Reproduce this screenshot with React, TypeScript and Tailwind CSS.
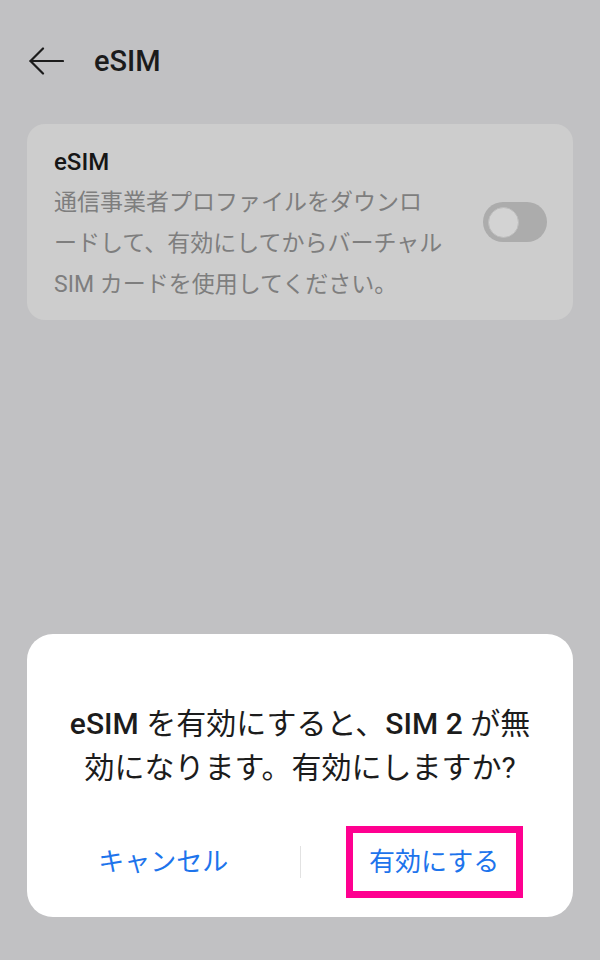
import React from "react";

export default function App() {
  const font = { fontFamily: 'Roboto, "Noto Sans CJK JP", sans-serif' };
  return (
    <div
      className="w-[600px] h-[960px] bg-[#c1c1c3] flex flex-col overflow-hidden"
      style={font}
    >
      {/* Header */}
      <div className="h-[122px] flex items-center pl-[29px] shrink-0">
        <svg width="35" height="28" viewBox="0 0 35 28" fill="none" className="shrink-0">
          <path d="M1.5 14H34" stroke="#1c1c1c" strokeWidth="2.2" strokeLinecap="round" />
          <path d="M14 1.5L1.5 14L14 26.5" stroke="#1c1c1c" strokeWidth="2.2" strokeLinecap="round" strokeLinejoin="round" />
        </svg>
        <div className="ml-[30px] text-[29px] font-medium text-[#1b1b1b] leading-none">eSIM</div>
      </div>

      {/* Card */}
      <div className="mx-[27px] mt-[2px] h-[196px] rounded-[18px] bg-[#cdcdcd] flex items-center pl-[27px] pr-[26px]">
        <div className="flex-1 flex flex-col pt-[7px]">
          <div className="text-[24px] leading-[32px] font-medium text-[#161616]">eSIM</div>
          <div className="mt-[4px] text-[23px] leading-[41px] text-[#7e7e7e] whitespace-nowrap">
            通信事業者プロファイルをダウンロ
            <br />
            ードして、有効にしてからバーチャル
            <br />
            SIM カードを使用してください。
          </div>
        </div>
        <div className="w-[64px] h-[40px] rounded-full bg-[#acacac] flex items-center shrink-0">
          <div className="ml-[5px] w-[31px] h-[31px] rounded-full bg-[#d3d3d3] border border-[#bdbdbd]" />
        </div>
      </div>

      {/* Dialog */}
      <div className="mt-auto mb-[43px] mx-[27px] h-[283px] rounded-[26px] bg-white flex flex-col">
        <div className="pt-[68px] text-center text-[30px] leading-[44px] text-[#1c1c1c]">
          <span className="font-medium">eSIM</span> を有効にすると、<span className="font-medium">SIM 2</span> が無
          <br />
          効になります。有効にしますか?
        </div>
        <div className="mt-[36px] h-[72px] flex items-center">
          <div className="flex-1 flex items-center justify-center text-[26px] text-[#1d74ec]">キャンセル</div>
          <div className="w-px h-[32px] bg-[#e2e2e2]" />
          <div className="flex-1 flex items-center justify-center">
            <span className="mr-[5px] w-[177px] h-[72px] border-[7px] border-[#ff0090] flex items-center justify-center text-[26px] text-[#1d74ec]">
              有効にする
            </span>
          </div>
        </div>
      </div>
    </div>
  );
}
